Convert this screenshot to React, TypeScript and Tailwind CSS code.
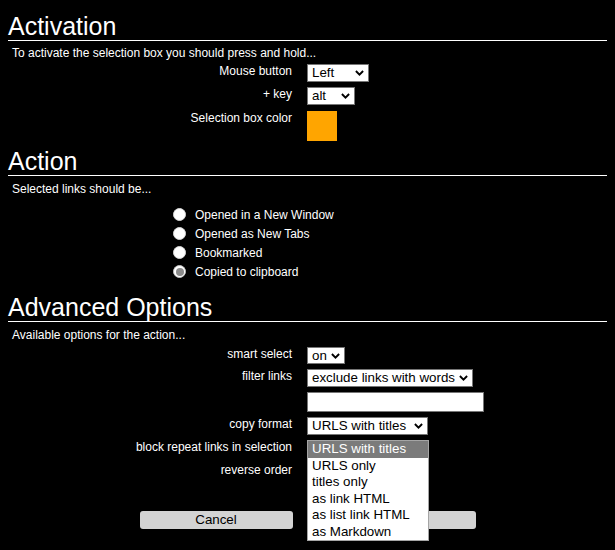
import type { ReactNode } from "react";

function Chevron() {
  return (
    <svg width="9" height="6" viewBox="0 0 9 6" className="shrink-0">
      <polyline points="0.9,1 4.5,4.6 8.1,1" fill="none" stroke="#000" strokeWidth="1.9" />
    </svg>
  );
}

function Select({ value, className }: { value: string; className: string }) {
  return (
    <div
      className={
        "flex items-center justify-between border border-[#767676] bg-white pl-[4px] pr-[4px] text-[13.33px] leading-[16px] text-black " +
        className
      }
    >
      <span className="whitespace-nowrap">{value}</span>
      <Chevron />
    </div>
  );
}

function Row({ label, className, children }: { label: string; className: string; children: ReactNode }) {
  return (
    <div className={"flex items-start " + className}>
      <div className="w-[284px] shrink-0 text-right text-[12px] leading-[14px]">{label}</div>
      <div className="ml-[15px]">{children}</div>
    </div>
  );
}

function Radio({ label, checked }: { label: string; checked?: boolean }) {
  return (
    <div className="flex h-[19px] items-center gap-[9px]">
      {checked ? (
        <span className="flex h-[13px] w-[13px] items-center justify-center rounded-full border border-[#c4c4c4] bg-white">
          <span className="h-[8px] w-[8px] rounded-full bg-[#8a8a8a]" />
        </span>
      ) : (
        <span className="h-[13px] w-[13px] rounded-full border border-[#d8d8d8] bg-white" />
      )}
      <span className="text-[12px] leading-[14px]">{label}</span>
    </div>
  );
}

const formats = ["URLS with titles", "URLS only", "titles only", "as link HTML", "as list link HTML", "as Markdown"];

export default function App() {
  return (
    <div className="min-h-[550px] bg-black px-2 pt-[12px] font-['Liberation_Sans',Arial,sans-serif] text-white">
      <h1 className="border-b border-white text-[25px] leading-[28px]">Activation</h1>
      <p className="mt-[5px] pl-1 text-[12px] leading-[14px]">To activate the selection box you should press and hold...</p>
      <Row label="Mouse button" className="mt-[4px]">
        <Select value="Left" className="h-[18px] w-[62px]" />
      </Row>
      <Row label="+ key" className="mt-[5px]">
        <Select value="alt" className="h-[18px] w-[48px]" />
      </Row>
      <Row label="Selection box color" className="mt-[6px]">
        <div className="h-[30px] w-[30px] bg-[#ffa500]" />
      </Row>

      <h1 className="mt-[6px] border-b border-white text-[25px] leading-[28px]">Action</h1>
      <p className="mt-[6px] pl-1 text-[12px] leading-[14px]">Selected links should be...</p>
      <div className="mt-[9px] pl-[165px]">
        <Radio label="Opened in a New Window" />
        <Radio label="Opened as New Tabs" />
        <Radio label="Bookmarked" />
        <Radio label="Copied to clipboard" checked />
      </div>

      <h1 className="mt-[12px] border-b border-white text-[25px] leading-[28px]">Advanced Options</h1>
      <p className="mt-[6px] pl-1 text-[12px] leading-[14px]">Available options for the action...</p>
      <Row label="smart select" className="mt-[5px]">
        <Select value="on" className="h-[17px] w-[38px]" />
      </Row>
      <Row label="filter links" className="mt-[5px]">
        <Select value="exclude links with words" className="h-[18px] w-[166px]" />
      </Row>
      <Row label="" className="mt-[5px]">
        <div className="h-[20px] w-[177px] border border-[#767676] bg-white" />
      </Row>
      <Row label="copy format" className="mt-[5px]">
        <div className="relative">
          <Select value="URLS with titles" className="h-[18px] w-[121px]" />
          {/* open dropdown of the copy format select */}
          <div className="absolute left-0 top-[23px] z-10 w-[122px] border border-[#a5a5a5] bg-white text-[13.33px] text-black">
            {formats.map((f, i) => (
              <div
                key={f}
                className={
                  i === 0
                    ? "flex h-[16.5px] items-center bg-[#7b7b7b] pl-[4px] text-white"
                    : "flex h-[16.5px] items-center pl-[4px]"
                }
              >
                {f}
              </div>
            ))}
          </div>
        </div>
      </Row>
      {/* these controls sit under the open dropdown */}
      <Row label="block repeat links in selection" className="mt-[5px]">
        <div className="h-[18px] w-[42px] border border-[#767676] bg-white" />
      </Row>
      <Row label="reverse order" className="mt-[5px]">
        <div className="h-[18px] w-[42px] border border-[#767676] bg-white" />
      </Row>

      <div className="mt-[30px] flex justify-center gap-[30px]">
        <button className="h-[18px] w-[153px] rounded-[3px] bg-[#d3d3d3] text-[13.33px] leading-[16px] text-black">
          Cancel
        </button>
        <button aria-label="Save" className="h-[18px] w-[153px] rounded-[3px] bg-[#d3d3d3]" />
      </div>
    </div>
  );
}
